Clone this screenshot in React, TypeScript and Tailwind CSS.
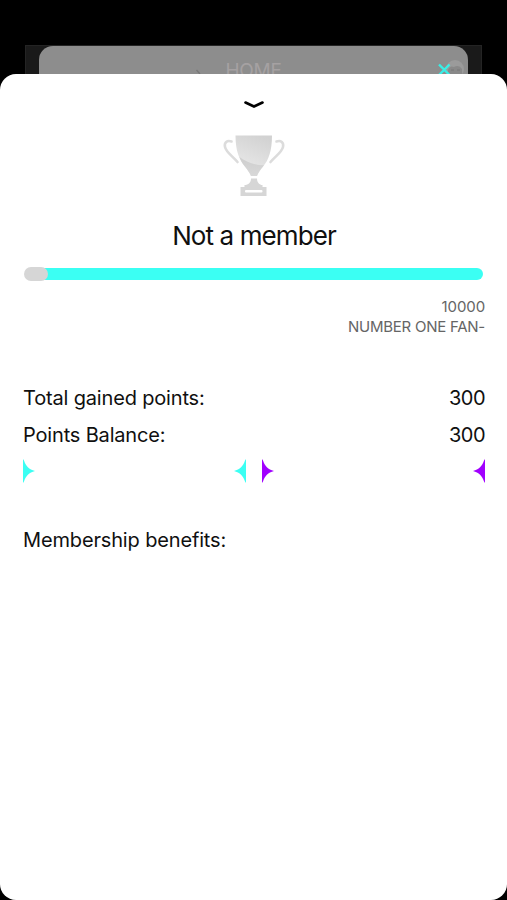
import React from "react";

function Trophy() {
  return (
    <svg width="64" height="64" viewBox="0 0 64 64" fill="none" className="block">
      <defs>
        <linearGradient id="bowl" x1="0.7" y1="0" x2="0.4" y2="0.8">
          <stop offset="0" stopColor="#d2d2d2" />
          <stop offset="1" stopColor="#e6e6e6" />
        </linearGradient>
        <linearGradient id="shade" x1="0" y1="0" x2="0" y2="1">
          <stop offset="0" stopColor="#cecece" />
          <stop offset="1" stopColor="#d8d8d8" />
        </linearGradient>
      </defs>
      <g stroke="#dcdcdc" strokeWidth="2.600" strokeLinecap="round" strokeLinejoin="round">
        <path d="M9.500 7.500C5 6 2 8.500 3 13C4.300 18.500 10.500 22 15.500 28" />
        <path d="M54.500 7.500C59 6 62 8.500 61 13C59.700 18.500 53.500 22 48.500 28" />
      </g>
      <path d="M13.500 1.500H50C50 17 46.500 26 41.500 32C37.500 37 36 39.500 35 42H29C28 39.500 26.500 37 22.500 32C17.500 26 13.500 17 13.500 1.500Z" fill="url(#bowl)" />
      <path d="M17.500 23C24 28 32 31 42 31.300C38 36 36 39 35 42H29C28 39.500 26.500 37 22.500 32C20 29 18.500 26 17.500 23Z" fill="url(#shade)" />
      <path d="M29 44.500H35C35 48.500 37.500 51 40.500 51V53H44.500V62H18.500V53H22.500V51C26.500 51 29 48.500 29 44.500Z" fill="#d6d6d6" />
      <rect x="23" y="56" width="17.500" height="2.500" rx="1" fill="#fff" />
    </svg>
  );
}

function Point({ flip = false }: { flip?: boolean }) {
  return (
    <svg width="12" height="24" viewBox="0 0 12 24" className={flip ? "-scale-x-100" : ""}>
      <path d="M0 0L1 1.500C2.800 7 6 10.500 12 12C6 13.500 2.800 17 1 22.500L0 24Z" fill="currentColor" />
    </svg>
  );
}

function Row({ label, value }: { label: string; value: string }) {
  return (
    <div className="flex h-[37px] items-center justify-between text-[20px] text-[#101010]">
      <span className="tracking-[-0.17px]">{label}</span>
      <span className="tracking-[-0.55px]">{value}</span>
    </div>
  );
}

function PreviousScreen() {
  return (
    <div className="mx-[25px] mt-[45px] h-[29px] border border-b-0 border-[#242424] bg-[#1a1a1a] px-[13px]">
      <div className="relative h-[60px] rounded-t-[14px] bg-[#8d8d8d] pt-[13px] text-center text-[19px] leading-[23px] text-[#a5a1a2]">
        <span className="tracking-[-0.3px]">HOME</span>
        <svg className="absolute left-[395px] top-[12px]" width="34" height="32" viewBox="0 0 34 32" fill="none">
          <circle cx="21" cy="11" r="9" fill="#9b9b9b" />
          <path d="M14 12Q16 7 20 9Q25 6 28 11V16H14Z" fill="#898989" />
          <path d="M17 12H20M23 12H26" stroke="#777" />
          <path d="M5 6.500L15.500 17M15.500 6.500L5 17" stroke="#38eee6" strokeWidth="2.400" />
        </svg>
        <svg className="absolute left-[156px] top-[20px]" width="8" height="10" fill="none">
          <path d="M1.500 4L5 8" stroke="#777" strokeWidth="1.300" />
        </svg>
      </div>
    </div>
  );
}

export default function App() {
  return (
    <main className="flex h-[900px] w-[507px] flex-col overflow-hidden bg-black font-['Inter',sans-serif]">
      <PreviousScreen />
      <section className="relative flex flex-1 flex-col rounded-[16px] bg-white pl-[23px] pr-[22px] text-[#101010]">
        <div className="flex flex-col items-center">
          <svg className="mt-[25px]" width="22" height="12" viewBox="0 0 22 12" fill="none">
            <path d="M2.500 3.500L11 7.500L19.500 3.500" stroke="#000" strokeWidth="2.600" strokeLinecap="round" />
          </svg>
          <div className="mt-[23px]">
            <Trophy />
          </div>
          <h1 className="mt-[22px] text-[26px] leading-[32px] tracking-[-0.9px]">Not a member</h1>
        </div>
        <div className="ml-[2px] mr-[2px] mt-[15px] flex h-[14px] items-center">
          <div className="relative h-3 w-full rounded-full bg-[#3bfff3]">
            <div className="absolute -left-px -top-px h-[14px] w-6 rounded-full bg-[#d6d6d6]" />
          </div>
        </div>
        <div className="mt-4 text-right text-[15px] leading-[20px] text-[#656565]">
          <p className="tracking-[-0.1px]">10000</p>
          <p className="tracking-[-0.25px]">NUMBER ONE FAN-</p>
        </div>
        <div className="mt-[42px]">
          <Row label="Total gained points:" value="300" />
          <Row label="Points Balance:" value="300" />
        </div>
        <div className="mt-[6px] grid grid-cols-2 gap-4">
          <div className="flex justify-between text-[#3bfff3]">
            <Point />
            <Point flip />
          </div>
          <div className="flex justify-between text-[#a100ff]">
            <Point />
            <Point flip />
          </div>
        </div>
        <h2 className="mt-[43px] text-[20px] leading-[28px] tracking-[-0.15px]">Membership benefits:</h2>
      </section>
    </main>
  );
}
